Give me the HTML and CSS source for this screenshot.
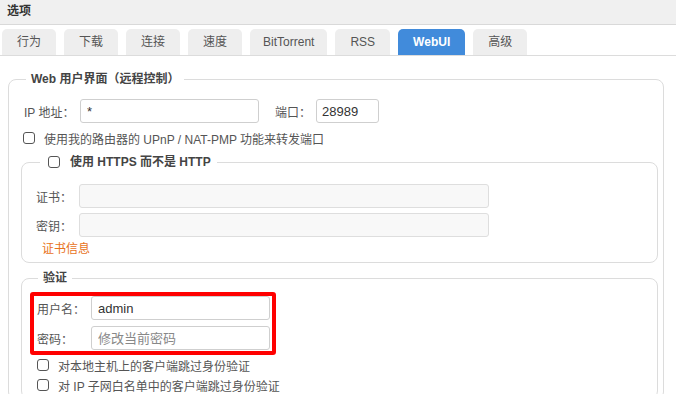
FILE: index.html
```html
<!DOCTYPE html>
<html lang="zh-CN">
<head>
<meta charset="utf-8">
<title>选项</title>
<link rel="stylesheet" href="styles.css">
</head>
<body>
<div class="header">选项</div>
<div class="tabbar">
  <div class="tab">行为</div>
  <div class="tab">下载</div>
  <div class="tab">连接</div>
  <div class="tab">速度</div>
  <div class="tab tab-long">BitTorrent</div>
  <div class="tab">RSS</div>
  <div class="tab active">WebUI</div>
  <div class="tab">高级</div>
</div>
<fieldset class="group outer">
  <legend class="legend-main">Web 用户界面（远程控制）</legend>
  <div class="row ip-row">
    <label class="lbl lbl-ip">IP 地址：</label>
    <input class="inp inp-ip" type="text" value="*">
    <label class="lbl lbl-port">端口：</label>
    <input class="inp inp-port" type="text" value="28989">
  </div>
  <label class="check-row upnp"><input type="checkbox" class="cb">使用我的路由器的 UPnP / NAT-PMP 功能来转发端口</label>

  <fieldset class="group inner https">
    <legend class="legend-check"><input type="checkbox" class="cb">使用 HTTPS 而不是 HTTP</legend>
    <div class="row field-row">
      <label class="lbl lbl-cert">证书：</label>
      <input class="inp inp-cert" type="text" disabled>
    </div>
    <div class="row field-row second">
      <label class="lbl lbl-cert">密钥：</label>
      <input class="inp inp-cert" type="text" disabled>
    </div>
    <div class="cert-link">证书信息</div>
  </fieldset>

  <fieldset class="group inner auth">
    <legend class="legend-auth">验证</legend>
    <div class="highlight">
      <div class="row field-row auth-row">
        <label class="lbl lbl-auth">用户名：</label>
        <input class="inp inp-auth" type="text" value="admin">
      </div>
      <div class="row field-row auth-row second2">
        <label class="lbl lbl-auth">密码：</label>
        <input class="inp inp-auth" type="password" placeholder="修改当前密码">
      </div>
    </div>
    <label class="check-row auth-check first"><input type="checkbox" class="cb">对本地主机上的客户端跳过身份验证</label>
    <label class="check-row auth-check"><input type="checkbox" class="cb">对 IP 子网白名单中的客户端跳过身份验证</label>
  </fieldset>
</fieldset>
</body>
</html>
```

FILE: styles.css
```css
*, *::before, *::after { box-sizing: border-box; }
html, body {
  margin: 0;
  padding: 0;
  background: #fff;
  overflow: hidden;
  height: 394px;
}
body {
  font-family: "Liberation Sans", "Noto Sans CJK SC", sans-serif;
  font-size: 12px;
  color: #555;
}
.header {
  height: 25px;
  background: #f0f0f0;
  border-bottom: 1px solid #d9d9d9;
  padding-left: 7px;
  font-weight: bold;
  color: #333;
  line-height: 23px;
}
.tabbar {
  display: flex;
  padding: 4px 0 0 2px;
  border-bottom: 1px solid #dcdcdc;
  height: 31px;
}
.tab {
  height: 26px;
  line-height: 26px;
  padding: 0 15px;
  min-width: 54px;
  text-align: center;
  background: #eeeeee;
  border-radius: 5px 5px 0 0;
  margin-right: 8px;
  color: #555;
}
.tab-long { padding: 0 13px; }
.tab.active {
  background: #418bdb;
  color: #fff;
  font-weight: bold;
}
.group {
  border: 1px solid #dcdcdc;
  border-radius: 8px;
  min-width: 0;
}
.outer {
  margin: 15px 12px 0 8px;
  padding: 12px 5px 0 12px;
}
.inner {
  margin: 0;
  padding: 14px 0 5px 14px;
}
legend {
  line-height: 16px;
  font-weight: bold;
  color: #444;
}
.legend-main {
  margin-left: 5px;
  padding: 0 5px;
}
.legend-check {
  margin-left: 4px;
  padding: 0 6px 0 8px;
  display: flex;
  align-items: center;
}
.legend-check .cb { margin-right: 10px; }
.legend-auth {
  margin-left: 2px;
  padding: 0 5px;
}
.row {
  display: flex;
  align-items: center;
}
.ip-row {
  height: 24px;
  padding-left: 3px;
}
.lbl { color: #555; white-space: nowrap; }
.lbl-ip { width: 56px; }
.lbl-port { width: 41px; margin-left: 16px; }
.inp {
  height: 24px;
  border: 1px solid #cfcfcf;
  border-radius: 3px;
  font-family: "Liberation Sans", "Noto Sans CJK SC", sans-serif;
  font-size: 13px;
  color: #333;
  padding: 0 6px;
  outline: none;
  background: #fff;
}
.inp::placeholder { color: #888; }
.inp:disabled {
  background: #f8f8f8;
  border-color: #dedede;
}
.inp-ip { width: 179px; }
.inp-port { width: 63px; padding-left: 5px; }
.check-row {
  display: flex;
  align-items: center;
  height: 16px;
  color: #555;
}
.cb {
  -webkit-appearance: none;
  appearance: none;
  width: 12px;
  height: 12px;
  margin: 0 9px 0 0;
  border: 1px solid #555;
  border-radius: 3px;
  background: #fff;
  flex: none;
}
.upnp {
  margin-top: 7px;
  padding-left: 2px;
}
.https { margin-top: 8px; margin-right: 0; }
.field-row { height: 24px; }
.field-row.second { margin-top: 5px; }
.lbl-cert { width: 43px; }
.inp-cert { width: 410px; }
.cert-link {
  margin-top: 4px;
  height: 16px;
  line-height: 16px;
  padding-left: 6px;
  color: #e8731c;
}
.auth { margin-top: 7px; padding-top: 10px; }
.highlight { position: relative; }
.highlight::after {
  content: "";
  position: absolute;
  left: -6px;
  top: -4px;
  width: 246px;
  height: 63px;
  border: 4px solid #ff0000;
  border-radius: 3px;
  pointer-events: none;
}
.auth-row { padding-left: 1px; }
.auth-row.second2 { margin-top: 6px; }
.lbl-auth { width: 54px; }
.inp-auth { width: 179px; }
.auth-check { padding-left: 1px; margin-top: 4px; }
.auth-check.first { margin-top: 7px; }
```
